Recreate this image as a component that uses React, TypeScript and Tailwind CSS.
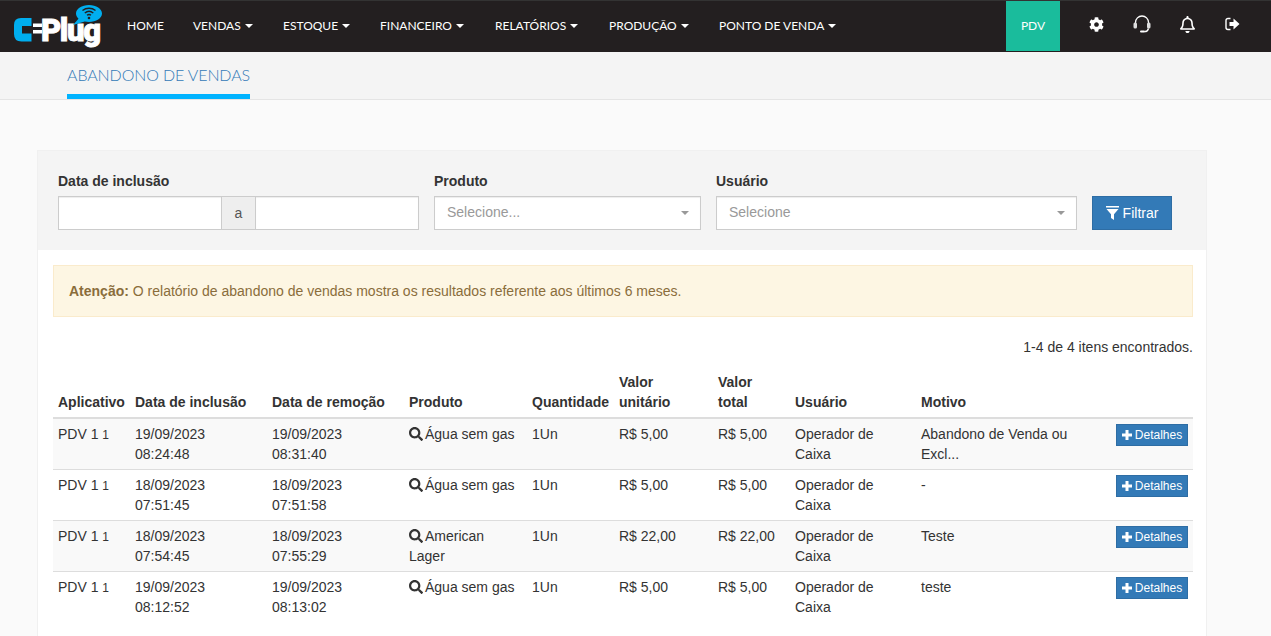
import { FaCog, FaRegBell, FaSearch } from "react-icons/fa"

const NAV = [
  { label: "HOME", caret: false, width: "w-[66px]" },
  { label: "VENDAS", caret: true, width: "w-[90px]" },
  { label: "ESTOQUE", caret: true, width: "w-[97px]" },
  { label: "FINANCEIRO", caret: true, width: "w-[115px]" },
  { label: "RELATÓRIOS", caret: true, width: "w-[114px]" },
  { label: "PRODUÇÃO", caret: true, width: "w-[110px]" },
  { label: "PONTO DE VENDA", caret: true, width: "w-[130px]" },
]

const ROWS = [
  { inc: "19/09/2023", incH: "08:24:48", rem: "19/09/2023", remH: "08:31:40", prod: "Água sem gas", val: "R$ 5,00", motivo: "Abandono de Venda ou Excl..." },
  { inc: "18/09/2023", incH: "07:51:45", rem: "18/09/2023", remH: "07:51:58", prod: "Água sem gas", val: "R$ 5,00", motivo: "-" },
  { inc: "18/09/2023", incH: "07:54:45", rem: "18/09/2023", remH: "07:55:29", prod: "American Lager", val: "R$ 22,00", motivo: "Teste" },
  { inc: "19/09/2023", incH: "08:12:52", rem: "19/09/2023", remH: "08:13:02", prod: "Água sem gas", val: "R$ 5,00", motivo: "teste" },
]

function Logo() {
  return (
    <svg width="92" height="51" viewBox="0 0 92 51" className="ml-[12px] shrink-0">
      <path d="M19.500 21H9Q6 21 6 24V33Q6 36.500 9.500 36.500H19.500" fill="none" stroke="#00aeef" strokeWidth="8" />
      <rect x="21" y="22.500" width="9" height="3.500" fill="#fff" />
      <rect x="21" y="29" width="9" height="3.500" fill="#fff" />
      <text x="29" y="40" fontFamily="Roboto, sans-serif" fontWeight="900" fontSize="31" textLength="60" fill="#fff" stroke="#fff" strokeWidth="0.9">Plug</text>
      <path d="M77 4c7.200 0 13 3.800 13 8.500S84.200 21 77 21c-1.500 0-3-.2-4.300-.5L61 24l5.500-6.200C65 16.300 64 14.500 64 12.500 64 7.800 69.800 4 77 4z" fill="#00aeef" />
      <path d="M70.500 9.500c3.800-3 9.200-3 13 0M72.800 12c2.500-2 6-2 8.500 0M75 14.300c1.300-1 2.800-1 4 0" fill="none" stroke="#231f20" strokeWidth="1.400" />
      <circle cx="77" cy="17" r="1.300" fill="#231f20" />
    </svg>
  )
}

function Caret({ className }: { className: string }) {
  return <span className={`inline-block h-0 w-0 border-x-[4px] border-t-[4px] border-x-transparent ${className}`} />
}

function Headset() {
  return (
    <svg width="18" height="18" viewBox="0 0 18 18" fill="none" stroke="#fff" strokeWidth="1.300" className="block">
      <path d="M2.500 8V7.500a6.500 6.500 0 0 1 13 0V8" />
      <rect x="0.500" y="7.500" width="3.500" height="6" rx="1.500" fill="#ddd" stroke="none" />
      <rect x="14" y="7.500" width="3.500" height="6" rx="1.500" fill="#ddd" stroke="none" />
      <path d="M15.500 13.500c-.4 1.900-1.800 3.100-4 3.100" />
      <rect x="7" y="15.600" width="5" height="2" rx="1" fill="#fff" stroke="none" />
    </svg>
  )
}

function SignOut() {
  return (
    <svg width="15" height="14" viewBox="0 0 15 14" fill="#fff" className="block">
      <path d="M5.500 1.500H3A2 2 0 0 0 1 3.500v7a2 2 0 0 0 2 2h2.500" fill="none" stroke="#fff" strokeWidth="1.400" />
      <path d="M4.500 5H8.500V1.500L14.500 7 8.500 12.500V9H4.500z" />
    </svg>
  )
}

function Funnel() {
  return (
    <svg width="13" height="14" viewBox="0 0 13 14" fill="#fff" className="block">
      <rect x="0" y="0" width="13" height="1.500" />
      <path d="M0.500 3H12.500L8 8.200V14L5 12V8.200z" />
    </svg>
  )
}

function Plus() {
  return (
    <svg width="10" height="10" viewBox="0 0 10 10" fill="#fff" className="block">
      <path d="M3.500 0H6.500V3.500H10V6.500H6.500V10H3.500V6.500H0V3.500H3.500z" />
    </svg>
  )
}

function SelectBox({ label, width }: { label: string; width: string }) {
  return (
    <div className={`flex h-[34px] items-center justify-between border border-[#ccc] bg-white pl-[12px] pr-[11px] shadow-[inset_0_1px_1px_rgba(0,0,0,0.075)] ${width}`}>
      <span className="-translate-y-px text-[14px] text-[#999]">{label}</span>
      <Caret className="border-t-[#999]" />
    </div>
  )
}

export default function App() {
  return (
    <div className="h-[636px] overflow-hidden bg-[#fafafa] font-['Liberation_Sans',Arial,sans-serif] text-[14px] leading-[20px] text-[#333]">
      <nav className="flex h-[52px] border-t border-t-[#333] bg-[#231f20] font-['Lato',sans-serif] text-[12px] text-white">
        <div className="flex w-[112px] items-start">
          <Logo />
        </div>
        <ul className="flex flex-1 items-center pb-[2px] pl-[15px]">
          {NAV.map((item) => (
            <li key={item.label} className={`flex shrink-0 items-center gap-[4px] ${item.width}`}>
              {item.label}
              {item.caret && <Caret className="border-t-white" />}
            </li>
          ))}
        </ul>
        <div className="mb-px flex w-[54px] items-center justify-center bg-[#1abc9c] text-[12px]">PDV</div>
        <div className="flex w-[211px] items-center pb-[5px] pl-[29px]">
          <FaCog className="mr-[29px] h-[15px] w-[15px]" />
          <span className="mr-[29px]"><Headset /></span>
          <FaRegBell className="mr-[30px] h-[17px] w-[15px]" />
          <SignOut />
        </div>
      </nav>

      <div className="h-[48px] border-b border-b-[#e4e4e4] bg-[#f4f4f4] pl-[67px] font-['Lato',sans-serif]">
        <div className="inline-block h-[47px] border-b-[5px] border-b-[#00b3ff] pt-[13px] text-[16px] font-light tracking-[-0.11px] text-[#337ab7]">
          ABANDONO DE VENDAS
        </div>
      </div>

      <div className="ml-[37px] mt-[50px] w-[1170px] border border-[#f0f0f0] bg-white">
        <div className="flex h-[99px] items-start bg-[#f4f4f4] pl-[20px] pt-[20px]">
          <div className="mr-[15px]">
            <div className="mb-[5px] font-bold">Data de inclusão</div>
            <div className="flex h-[34px] w-[361px]">
              <div className="flex-1 border border-[#ccc] bg-white shadow-[inset_0_1px_1px_rgba(0,0,0,0.075)]" />
              <div className="flex w-[33px] items-center justify-center border-y border-[#ccc] bg-[#eee] text-[#555]">a</div>
              <div className="flex-1 border border-[#ccc] bg-white shadow-[inset_0_1px_1px_rgba(0,0,0,0.075)]" />
            </div>
          </div>
          <div className="mr-[15px]">
            <div className="mb-[5px] font-bold">Produto</div>
            <SelectBox label="Selecione..." width="w-[267px]" />
          </div>
          <div className="mr-[15px]">
            <div className="mb-[5px] font-bold">Usuário</div>
            <SelectBox label="Selecione" width="w-[361px]" />
          </div>
          <button className="mt-[25px] flex h-[34px] w-[80px] items-center justify-center gap-[4px] border border-[#2e6da4] bg-[#337ab7] text-white">
            <Funnel />
            Filtrar
          </button>
        </div>

        <div className="pb-[40px] pl-[15px] pr-[13px] pt-[15px]">
          <div className="flex h-[52px] items-center border border-[#faebcc] bg-[#fdf6e3] px-[15px] text-[#8a6d3b]">
            <span><b>Atenção:</b> O relatório de abandono de vendas mostra os resultados referente aos últimos 6 meses.</span>
          </div>
          <div className="mb-[10px] mt-[20px] text-right">1-4 de 4 itens encontrados.</div>

          <table className="w-[1140px] table-fixed border-collapse">
            <colgroup>
              <col className="w-[77px]" />
              <col className="w-[137px]" />
              <col className="w-[137px]" />
              <col className="w-[123px]" />
              <col className="w-[87px]" />
              <col className="w-[99px]" />
              <col className="w-[77px]" />
              <col className="w-[126px]" />
              <col className="w-[190px]" />
              <col className="w-[87px]" />
            </colgroup>
            <thead>
              <tr className="border-b-2 border-b-[#ddd] text-left align-bottom">
                <th className="p-[5px]">Aplicativo</th>
                <th className="p-[5px]">Data de inclusão</th>
                <th className="p-[5px]">Data de remoção</th>
                <th className="p-[5px]">Produto</th>
                <th className="p-[5px]">Quantidade</th>
                <th className="p-[5px]">Valor<br />unitário</th>
                <th className="p-[5px]">Valor<br />total</th>
                <th className="p-[5px]">Usuário</th>
                <th className="p-[5px]">Motivo</th>
                <th className="p-[5px]" />
              </tr>
            </thead>
            <tbody>
              {ROWS.map((row, i) => (
                <tr key={i} className={`align-top ${i < 3 ? "border-b border-b-[#ddd]" : ""} ${i % 2 === 0 ? "bg-[#f9f9f9]" : "bg-white"}`}>
                  <td className="p-[5px]">PDV 1 <span className="text-[12px]">1</span></td>
                  <td className="p-[5px]">{row.inc}<br />{row.incH}</td>
                  <td className="p-[5px]">{row.rem}<br />{row.remH}</td>
                  <td className="p-[5px]">
                    <FaSearch className="mr-[2px] inline h-[14px] w-[14px] align-[-2px]" />
                    {row.prod}
                  </td>
                  <td className="p-[5px]">1Un</td>
                  <td className="p-[5px]">{row.val}</td>
                  <td className="p-[5px]">{row.val}</td>
                  <td className="p-[5px]">Operador de Caixa</td>
                  <td className="p-[5px] pr-[15px]">{row.motivo}</td>
                  <td className="p-[5px] text-right">
                    <button className="inline-flex h-[22px] w-[72px] items-center justify-center gap-[3px] border border-[#2e6da4] bg-[#337ab7] text-[12px] leading-[18px] text-white">
                      <Plus />
                      Detalhes
                    </button>
                  </td>
                </tr>
              ))}
            </tbody>
          </table>
        </div>
      </div>
    </div>
  )
}
